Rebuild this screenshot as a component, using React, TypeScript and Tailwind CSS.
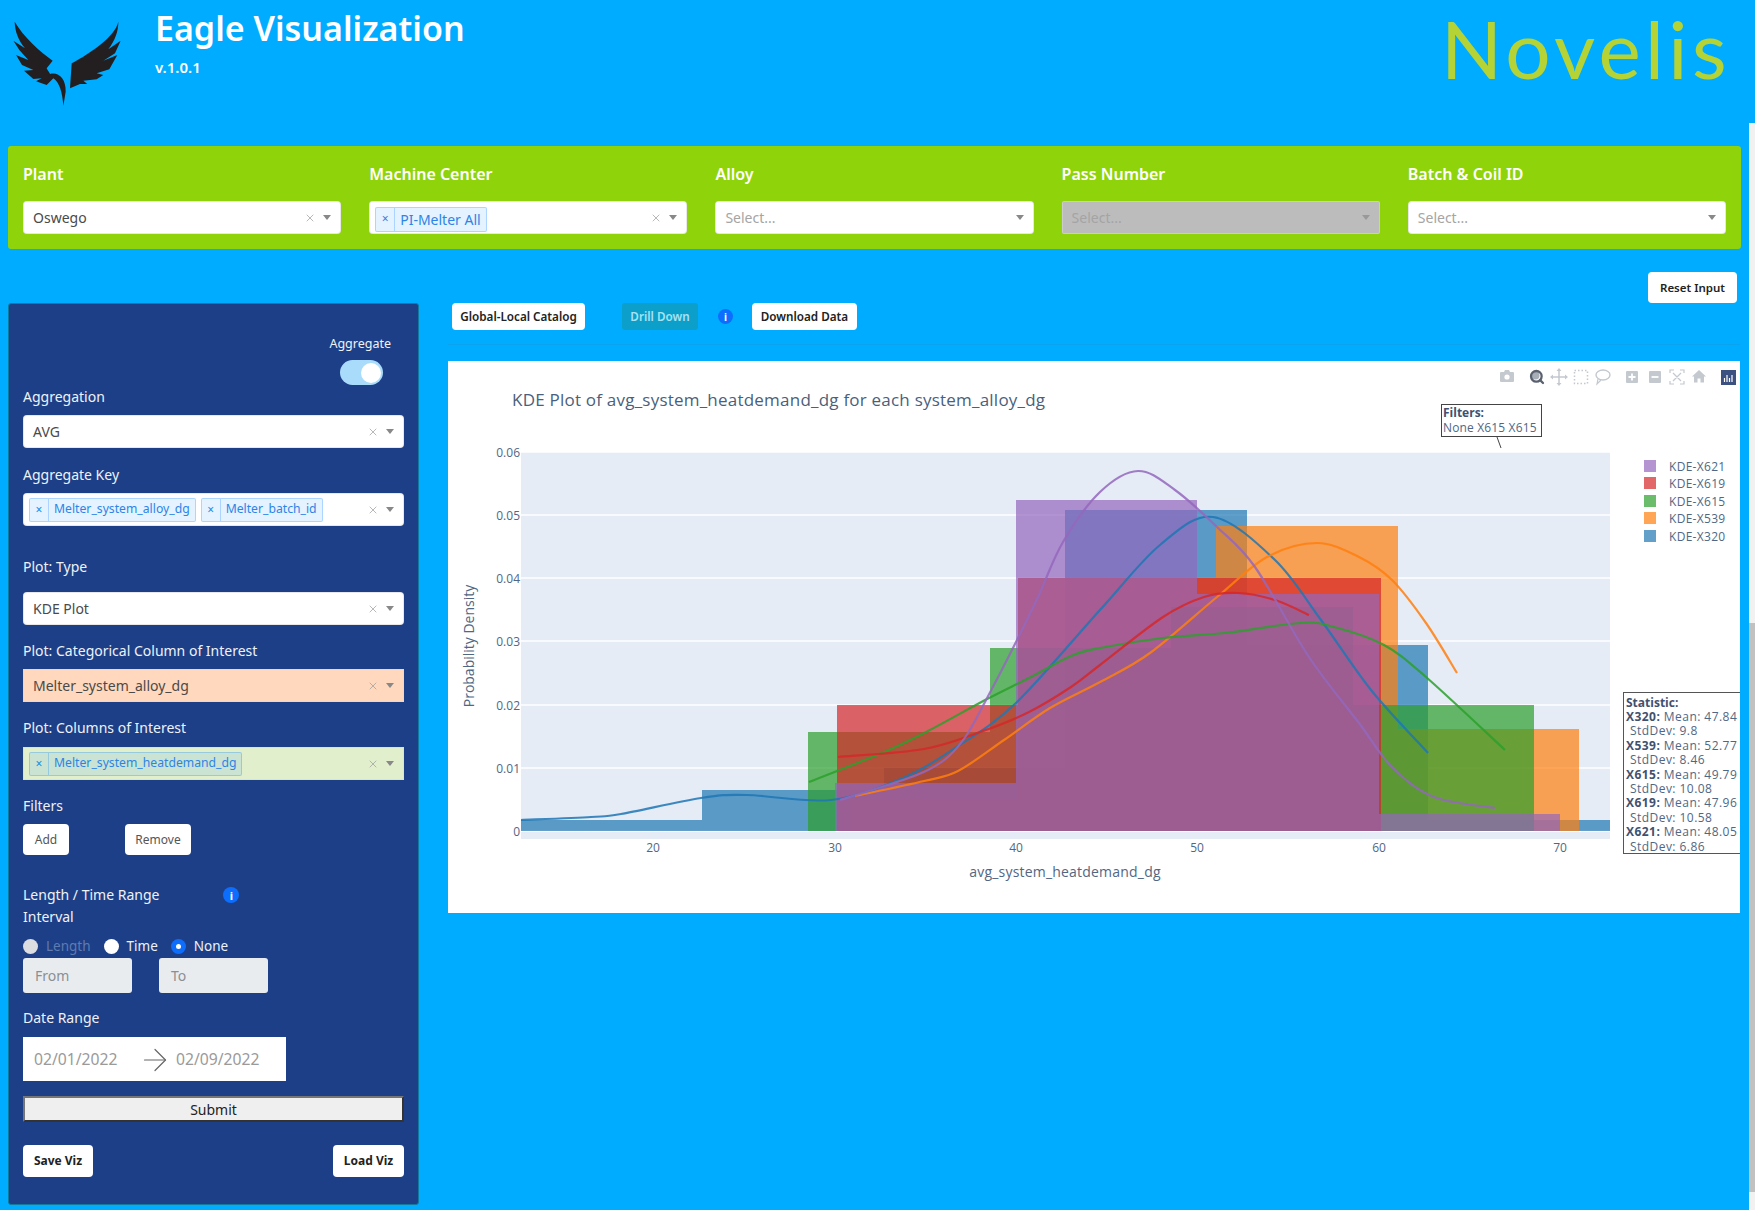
import { ArrowRight, Search, X } from "lucide-react";

const Caret = ({ className = "border-t-[#888]" }: { className?: string }) => (
  <span className={`w-0 h-0 border-x-[4px] border-x-transparent border-t-[5px] ${className}`} />
);

type SelectProps = {
  value?: string;
  chips?: string[];
  placeholder?: string;
  clear?: boolean;
  small?: boolean;
  disabled?: boolean;
  className?: string;
};

const Select = ({ value, chips, placeholder, clear = true, small, disabled, className = "bg-white rounded-[4px]" }: SelectProps) => (
  <div className={`h-[33px] flex items-center border border-[#d9d9d9]/60 pl-[9px] pr-[9px] text-[14px] text-[#4a4a4a] ${disabled ? "bg-[#bcbcbc] rounded-[2px]" : className}`}>
    <div className="flex-1 flex items-center gap-[5px] min-w-0">
      {chips?.map((chip) => (
        <span
          key={chip}
          className={`-ml-[4px] mr-[4px] first:ml-[-4px] flex items-center rounded-[2px] border border-[#007eff]/25 bg-[#007eff]/10 text-[#2d84e6] ${small ? "h-[24px] text-[12.2px]" : "h-[25px] mt-[3px] text-[14px]"}`}
        >
          <span className="w-[19px] h-full flex items-center justify-center border-r border-[#007eff]/25 text-[12px]">×</span>
          <span className="px-[5px]">{chip}</span>
        </span>
      ))}
      {value && <span>{value}</span>}
      {placeholder && <span className={disabled ? "text-[#a4a4a4]" : "text-[#a5a5a5]"}>{placeholder}</span>}
    </div>
    {clear && <X size={12} strokeWidth={1.4} className="text-[#999] mr-[7px]" />}
    <Caret className={disabled ? "border-t-[#999]" : "border-t-[#888]"} />
  </div>
);

const Filter = ({ label, children }: { label: string; children: React.ReactNode }) => (
  <div>
    <div className="h-[24px] leading-[24px] text-[16px] font-semibold text-white mb-[15px]">{label}</div>
    {children}
  </div>
);

const Btn = ({ children, className = "" }: { children: React.ReactNode; className?: string }) => (
  <button className={`flex items-center justify-center bg-white rounded-[4px] text-[#222] ${className}`}>
    {children}
  </button>
);

const SideLabel = ({ children, className = "" }: { children: React.ReactNode; className?: string }) => (
  <div className={`h-[20px] leading-[20px] text-[14px] text-[#eef2f8] ${className}`}>{children}</div>
);

const Radio = ({ label, checked, dim }: { label: string; checked?: boolean; dim?: boolean }) => (
  <div className="flex items-center gap-[8px]">
    <span className={`w-[15px] h-[15px] rounded-full flex items-center justify-center ${checked ? "bg-[#0d6efd]" : dim ? "bg-[#dcdde0]" : "bg-white"}`}>
      {checked && <span className="w-[5px] h-[5px] rounded-full bg-white" />}
    </span>
    <span className={`text-[13.5px] ${dim ? "text-[#5f7bb0]" : "text-[#eef2f8]"}`}>{label}</span>
  </div>
);

// plotly colours, last one painted on top
const series = {
  x320: "#1f77b4",
  x539: "#ff7f0e",
  x615: "#2ca02c",
  x619: "#d62728",
  x621: "#9467bd",
};

const BASE = 831;

const bars: { color: string; bins: [number, number, number][] }[] = [
  {
    color: series.x320,
    bins: [
      [521, 702, 820],
      [702, 884, 790],
      [884, 1065, 768],
      [1065, 1247, 510],
      [1247, 1428, 645],
      [1428, 1610, 820],
    ],
  },
  {
    color: series.x539,
    bins: [
      [852, 1018, 800],
      [1018, 1216, 578],
      [1216, 1398, 526],
      [1398, 1579, 729],
    ],
  },
  {
    color: series.x615,
    bins: [
      [808, 990, 732],
      [990, 1171, 648],
      [1171, 1353, 607],
      [1353, 1534, 705],
    ],
  },
  {
    color: series.x619,
    bins: [
      [837, 1018, 705],
      [1018, 1199, 578],
      [1199, 1381, 578],
    ],
  },
  {
    color: series.x621,
    bins: [
      [835, 1016, 783],
      [1016, 1197, 500],
      [1197, 1379, 594],
      [1379, 1560, 814],
    ],
  },
];

const curves: { color: string; pts: [number, number][] }[] = [
  {
    color: series.x320,
    pts: [[521, 820], [591, 817], [621, 814], [701, 798], [747, 795], [831, 800], [903, 778], [958, 746], [1016, 703], [1100, 610], [1160, 545], [1213, 517], [1275, 560], [1321, 620], [1371, 690], [1428, 753]],
  },
  {
    color: series.x539,
    pts: [[855, 796], [924, 781], [958, 771], [1004, 740], [1050, 708], [1100, 682], [1150, 653], [1217, 597], [1267, 557], [1317, 543], [1359, 557], [1392, 580], [1426, 623], [1457, 673]],
  },
  {
    color: series.x615,
    pts: [[809, 782], [882, 753], [928, 731], [987, 699], [1029, 678], [1071, 656], [1100, 648], [1163, 638], [1225, 633], [1300, 623], [1334, 627], [1384, 645], [1426, 677], [1505, 750]],
  },
  {
    color: series.x619,
    pts: [[838, 757], [924, 749], [983, 731], [1029, 712], [1071, 687], [1100, 665], [1163, 617], [1204, 597], [1238, 593], [1275, 600], [1309, 615]],
  },
  {
    color: series.x621,
    pts: [[840, 800], [903, 780], [928, 770], [948, 757], [966, 736], [985, 702], [1012, 650], [1038, 597], [1063, 542], [1100, 492], [1138, 471], [1175, 490], [1217, 527], [1255, 567], [1309, 657], [1359, 723], [1392, 767], [1434, 797], [1495, 808]],
  },
];

// catmull-rom through the sampled points
const smooth = (pts: [number, number][]) => {
  let d = `M${pts[0][0]} ${pts[0][1]}`;
  for (let i = 0; i < pts.length - 1; i++) {
    const p0 = pts[i - 1] ?? pts[i];
    const p1 = pts[i];
    const p2 = pts[i + 1];
    const p3 = pts[i + 2] ?? p2;
    const c1x = p1[0] + (p2[0] - p0[0]) / 6;
    const c1y = p1[1] + (p2[1] - p0[1]) / 6;
    const c2x = p2[0] - (p3[0] - p1[0]) / 6;
    const c2y = p2[1] - (p3[1] - p1[1]) / 6;
    d += ` C${c1x} ${c1y} ${c2x} ${c2y} ${p2[0]} ${p2[1]}`;
  }
  return d;
};

const yTicks: [string, number][] = [["0.06", 452], ["0.05", 515], ["0.04", 578], ["0.03", 641], ["0.02", 705], ["0.01", 768], ["0", 831]];
const xTicks: [string, number][] = [["20", 653], ["30", 835], ["40", 1016], ["50", 1197], ["60", 1379], ["70", 1560]];
const legend: [string, string, number][] = [
  ["KDE-X621", series.x621, 466],
  ["KDE-X619", series.x619, 483],
  ["KDE-X615", series.x615, 501],
  ["KDE-X539", series.x539, 518],
  ["KDE-X320", series.x320, 536],
];
const stats: [string, string, string][] = [
  ["X320:", "Mean: 47.84", "StdDev: 9.8"],
  ["X539:", "Mean: 52.77", "StdDev: 8.46"],
  ["X615:", "Mean: 49.79", "StdDev: 10.08"],
  ["X619:", "Mean: 47.96", "StdDev: 10.58"],
  ["X621:", "Mean: 48.05", "StdDev: 6.86"],
];

const Modebar = () => (
  <g fill="#c4c8cf" stroke="none">
    {/* camera */}
    <path d="M1501 372h3l1-2h4l1 2h3a1 1 0 0 1 1 1v8a1 1 0 0 1-1 1h-12a1 1 0 0 1-1-1v-8a1 1 0 0 1 1-1z" />
    <circle cx="1507" cy="377" r="2.6" fill="#fff" />
    {/* zoom, active */}
    <circle cx="1535.5" cy="375.5" r="4" fill="#a9adb5" />
    <Search x={1529} y={369} width={16} height={16} strokeWidth={3.4} color="#59606e" fill="none" />
    {/* pan */}
    <path d="M1559 370v14M1552 377h14" stroke="#c4c8cf" strokeWidth="1.5" />
    <path d="M1559 368l2.5 3h-5zM1559 386l2.5-3h-5zM1550 377l3-2.5v5zM1568 377l-3-2.5v5z" />
    {/* box select */}
    <rect x="1574.5" y="370.5" width="13" height="13" fill="none" stroke="#c4c8cf" strokeWidth="1.5" strokeDasharray="1.5 2" />
    {/* lasso */}
    <ellipse cx="1603" cy="375" rx="7" ry="5" fill="none" stroke="#c4c8cf" strokeWidth="1.4" />
    <path d="M1598 379l-1 5 4-4" fill="none" stroke="#c4c8cf" strokeWidth="1.2" />
    {/* zoom in / out */}
    <rect x="1626" y="371" width="12" height="12" rx="1" />
    <path d="M1632 373.5v7M1628.5 377h7" stroke="#fff" strokeWidth="1.8" />
    <rect x="1649" y="371" width="12" height="12" rx="1" />
    <path d="M1651.5 377h7" stroke="#fff" strokeWidth="1.8" />
    {/* autoscale */}
    <path d="M1670 373v-3h4M1684 373v-3h-4M1670 381v3h4M1684 381v3h-4M1673 373l8 8M1681 373l-8 8" fill="none" stroke="#c4c8cf" strokeWidth="1.2" />
    {/* home */}
    <path d="M1699 370l7 6.5h-2v6h-3.5v-4h-3v4H1694v-6h-2z" />
    {/* plotly */}
    <rect x="1721" y="370" width="15" height="15" fill="#3d5181" />
    <path d="M1724.5 378v4M1727 375v7M1729.5 378v4M1732 375v7" stroke="#fff" strokeWidth="1.2" />
  </g>
);

const Chart = () => (
  <svg viewBox="448 361 1292 552" className="block w-[1292px] h-[552px] font-['Open_Sans',sans-serif]">
    <rect x="448" y="361" width="1292" height="552" fill="#fff" />
    <rect x="521" y="452" width="1089" height="387" fill="#e5ecf6" />
    {yTicks.map(([label, y]) => (
      <g key={label}>
        <line x1="521" x2="1610" y1={y} y2={y} stroke="#fff" strokeWidth={label === "0" ? 2 : 1.5} />
        <text x="520" y={y + 5} textAnchor="end" fontSize="12" fill="#506784">{label}</text>
      </g>
    ))}
    {bars.map((s) =>
      s.bins.map(([x0, x1, top]) => (
        <rect key={`${s.color}-${x0}`} x={x0} y={top} width={x1 - x0} height={BASE - top} fill={s.color} opacity={0.7} />
      )),
    )}
    {curves.map((c) => (
      <path key={c.color} d={smooth(c.pts)} fill="none" stroke={c.color} strokeWidth="2.2" strokeOpacity="0.85" />
    ))}
    {xTicks.map(([label, x]) => (
      <text key={label} x={x} y="852" textAnchor="middle" fontSize="12" fill="#506784">{label}</text>
    ))}
    <text x="512" y="406" fontSize="17" letterSpacing="0.22" fill="#4a5f7c">KDE Plot of avg_system_heatdemand_dg for each system_alloy_dg</text>
    <text x="1065" y="877" textAnchor="middle" fontSize="14" letterSpacing="0.2" fill="#506784">avg_system_heatdemand_dg</text>
    <text transform="translate(474 646) rotate(-90)" textAnchor="middle" fontSize="14" fill="#506784">Probability Density</text>
    {legend.map(([label, color, y]) => (
      <g key={label}>
        <rect x="1644" y={y - 6} width="12" height="12" fill={color} opacity={0.7} />
        <text x="1669" y={y + 5} fontSize="12" letterSpacing="0.3" fill="#506784">{label}</text>
      </g>
    ))}
    <line x1="1497" y1="437" x2="1501" y2="448" stroke="#444" strokeWidth="1" />
    <rect x="1441.5" y="404.5" width="100" height="32" fill="#fff" stroke="#444" />
    <text x="1443" y="417" fontSize="12" fill="#3f5170" fontWeight="700">Filters:</text>
    <text x="1443" y="432" fontSize="12" letterSpacing="0.15" fill="#506784">None X615 X615</text>
    <rect x="1623.5" y="692.5" width="130" height="161" fill="#fff" stroke="#555" />
    <text x="1626" y="707" fontSize="12" fill="#3f5170" fontWeight="700">Statistic:</text>
    {stats.map(([name, mean, std], i) => (
      <g key={name} fontSize="12" letterSpacing="0.45" fill="#506784">
        <text x="1626" y={721 + i * 28.8}>
          <tspan fontWeight="700" fill="#3f5170">{name}</tspan> {mean}
        </text>
        <text x="1630" y={735.4 + i * 28.8}>{std}</text>
      </g>
    ))}
    <Modebar />
  </svg>
);

const Logo = () => (
  <svg viewBox="0 0 420 300" className="w-[140px] h-[100px] shrink-0 mt-[10px]" fill="#231f20">
    <path d="M44 35C70 80 120 125 158 152L140 175C145 185 150 190 150 192C175 185 198 205 197 245L190 288C188 250 178 215 160 205L140 225L108 214L125 205L100 207L72 182L100 180L66 165L48 135L85 150L58 120L40 92L75 115C55 90 45 65 44 35Z" />
    <path d="M355 35C345 80 270 130 215 160L210 235L240 222L262 222L250 212L290 208L310 195L290 190L328 178L352 135L310 152L345 130L362 92L325 118C345 90 355 65 355 35Z" />
  </svg>
);

export default function App() {
  return (
    <div className="flex w-[1755px] h-[1210px] overflow-hidden bg-[#00acff] font-['Noto_Sans',sans-serif]">
      <div className="w-[1749px] shrink-0">
        <header className="h-[146px] flex items-start">
          <Logo />
          <div className="ml-[15px]">
            <h1 className="h-[56px] leading-[56px] text-[34px] font-semibold text-white">Eagle Visualization</h1>
            <p className="h-[24px] leading-[24px] -mt-[1px] text-[15px] font-semibold text-white">v.1.0.1</p>
          </div>
          <div className="ml-auto mr-[18px] h-[96px] leading-[96px] text-[80px] tracking-[4.4px] font-normal text-[#b5d334] font-['Lato',sans-serif]">Novelis</div>
        </header>

        <section className="mx-[8px] h-[103px] rounded-[3px] bg-[#8fd40a] px-[15px] pt-[16px] grid grid-cols-5 gap-x-[28px]">
          <Filter label="Plant"><Select value="Oswego" /></Filter>
          <Filter label="Machine Center"><Select chips={["PI-Melter All"]} /></Filter>
          <Filter label="Alloy"><Select placeholder="Select..." clear={false} /></Filter>
          <Filter label="Pass Number"><Select placeholder="Select..." clear={false} disabled /></Filter>
          <Filter label="Batch & Coil ID"><Select placeholder="Select..." clear={false} /></Filter>
        </section>

        <div className="flex mt-[23px] pr-[12px] justify-end">
          <Btn className="w-[89px] h-[31px] text-[11.5px] font-semibold">Reset Input</Btn>
        </div>

        <div className="flex items-start ml-[8px]">
          <aside className="w-[411px] h-[902px] shrink-0 rounded-[3px] border border-[#127a9e] bg-[#1d3f87] px-[14px] pt-[30px]">
            <div className="flex flex-col items-end pr-[13px]">
              <div className="h-[20px] leading-[20px] text-[12.5px] text-[#eef2f8]">Aggregate</div>
              <div className="mt-[6px] mr-[8px] w-[43px] h-[25px] rounded-full bg-[#a9dcfb] flex items-center justify-end pr-[2px]">
                <span className="w-[20px] h-[20px] rounded-full bg-white" />
              </div>
            </div>
            <SideLabel className="mt-[2px] mb-[8px]">Aggregation</SideLabel>
            <Select value="AVG" />
            <SideLabel className="mt-[17px] mb-[8px]">Aggregate Key</SideLabel>
            <Select chips={["Melter_system_alloy_dg", "Melter_batch_id"]} small />
            <SideLabel className="mt-[31px] mb-[15px]">Plot: Type</SideLabel>
            <Select value="KDE Plot" />
            <SideLabel className="mt-[16px] mb-[8px]">Plot: Categorical Column of Interest</SideLabel>
            <Select value="Melter_system_alloy_dg" className="bg-[#ffd8bd]" />
            <SideLabel className="mt-[16px] mb-[9px]">Plot: Columns of Interest</SideLabel>
            <Select chips={["Melter_system_heatdemand_dg"]} small className="bg-[#e1efcd]" />

            <SideLabel className="mt-[16px] mb-[8px]">Filters</SideLabel>
            <div className="flex">
              <Btn className="w-[46px] h-[31px] text-[12px] text-[#555]">Add</Btn>
              <Btn className="w-[66px] h-[31px] ml-[56px] text-[12px] text-[#555]">Remove</Btn>
            </div>

            <div className="flex items-center mt-[30px] h-[20px]">
              <SideLabel>Length / Time Range</SideLabel>
              <span className="ml-[64px] w-[16px] h-[16px] rounded-full bg-[#0d6efd] flex items-center justify-center text-white text-[11px] font-bold leading-none">i</span>
            </div>
            <SideLabel className="mt-[2px]">Interval</SideLabel>
            <div className="flex items-center gap-[13px] mt-[9px] h-[20px]">
              <Radio label="Length" dim />
              <Radio label="Time" />
              <Radio label="None" checked />
            </div>
            <div className="flex gap-[27px] mt-[2px]">
              <div className="w-[109px] h-[35px] rounded-[3px] bg-[#e9ecef] pl-[12px] leading-[35px] text-[14px] text-[#8a8f94]">From</div>
              <div className="w-[109px] h-[35px] rounded-[3px] bg-[#e9ecef] pl-[12px] leading-[35px] text-[14px] text-[#8a8f94]">To</div>
            </div>
            <SideLabel className="mt-[15px] mb-[9px]">Date Range</SideLabel>
            <div className="w-[263px] h-[44px] bg-white flex items-center pl-[11px] pt-[1px] text-[15.7px] text-[#9a9a9a]">
              <span className="w-[94px]">02/01/2022</span>
              <ArrowRight size={36} strokeWidth={0.8} className="ml-[9px] text-[#666]" />
              <span className="ml-[3px]">02/09/2022</span>
            </div>
            <button className="mt-[15px] w-full h-[26px] bg-[#efefef] border-2 border-t-[#767676] border-l-[#767676] border-r-[#333] border-b-[#333] text-[14px] text-[#222]">Submit</button>
            <div className="flex justify-between mt-[23px]">
              <Btn className="w-[70px] h-[32px] text-[12px] font-bold">Save Viz</Btn>
              <Btn className="w-[71px] h-[32px] text-[12px] font-bold">Load Viz</Btn>
            </div>
          </aside>

          <main className="ml-[29px] w-[1292px]">
            <div className="h-[42px] pl-[4px] border-b border-[#09a3f0] flex items-start">
              <Btn className="w-[133px] h-[27px] text-[11.7px] font-semibold">Global-Local Catalog</Btn>
              <div className="ml-[37px] w-[76px] h-[27px] rounded-[3px] bg-[#0c9fc9] flex items-center justify-center text-[11.7px] font-semibold text-[#a5e3f5]">Drill Down</div>
              <span className="ml-[20px] mt-[6px] w-[15px] h-[15px] rounded-full bg-[#0d6efd] flex items-center justify-center text-white text-[10px] font-bold leading-none">i</span>
              <Btn className="ml-[19px] w-[105px] h-[27px] text-[11.7px] font-semibold">Download Data</Btn>
            </div>
            <div className="mt-[16px]"><Chart /></div>
          </main>
        </div>
      </div>

      <div className="w-[6px] mt-[123px] bg-[#f1f1f1] flex flex-col">
        <div className="mt-[500px] h-[569px] bg-[#c1c1c1]" />
      </div>
    </div>
  );
}
